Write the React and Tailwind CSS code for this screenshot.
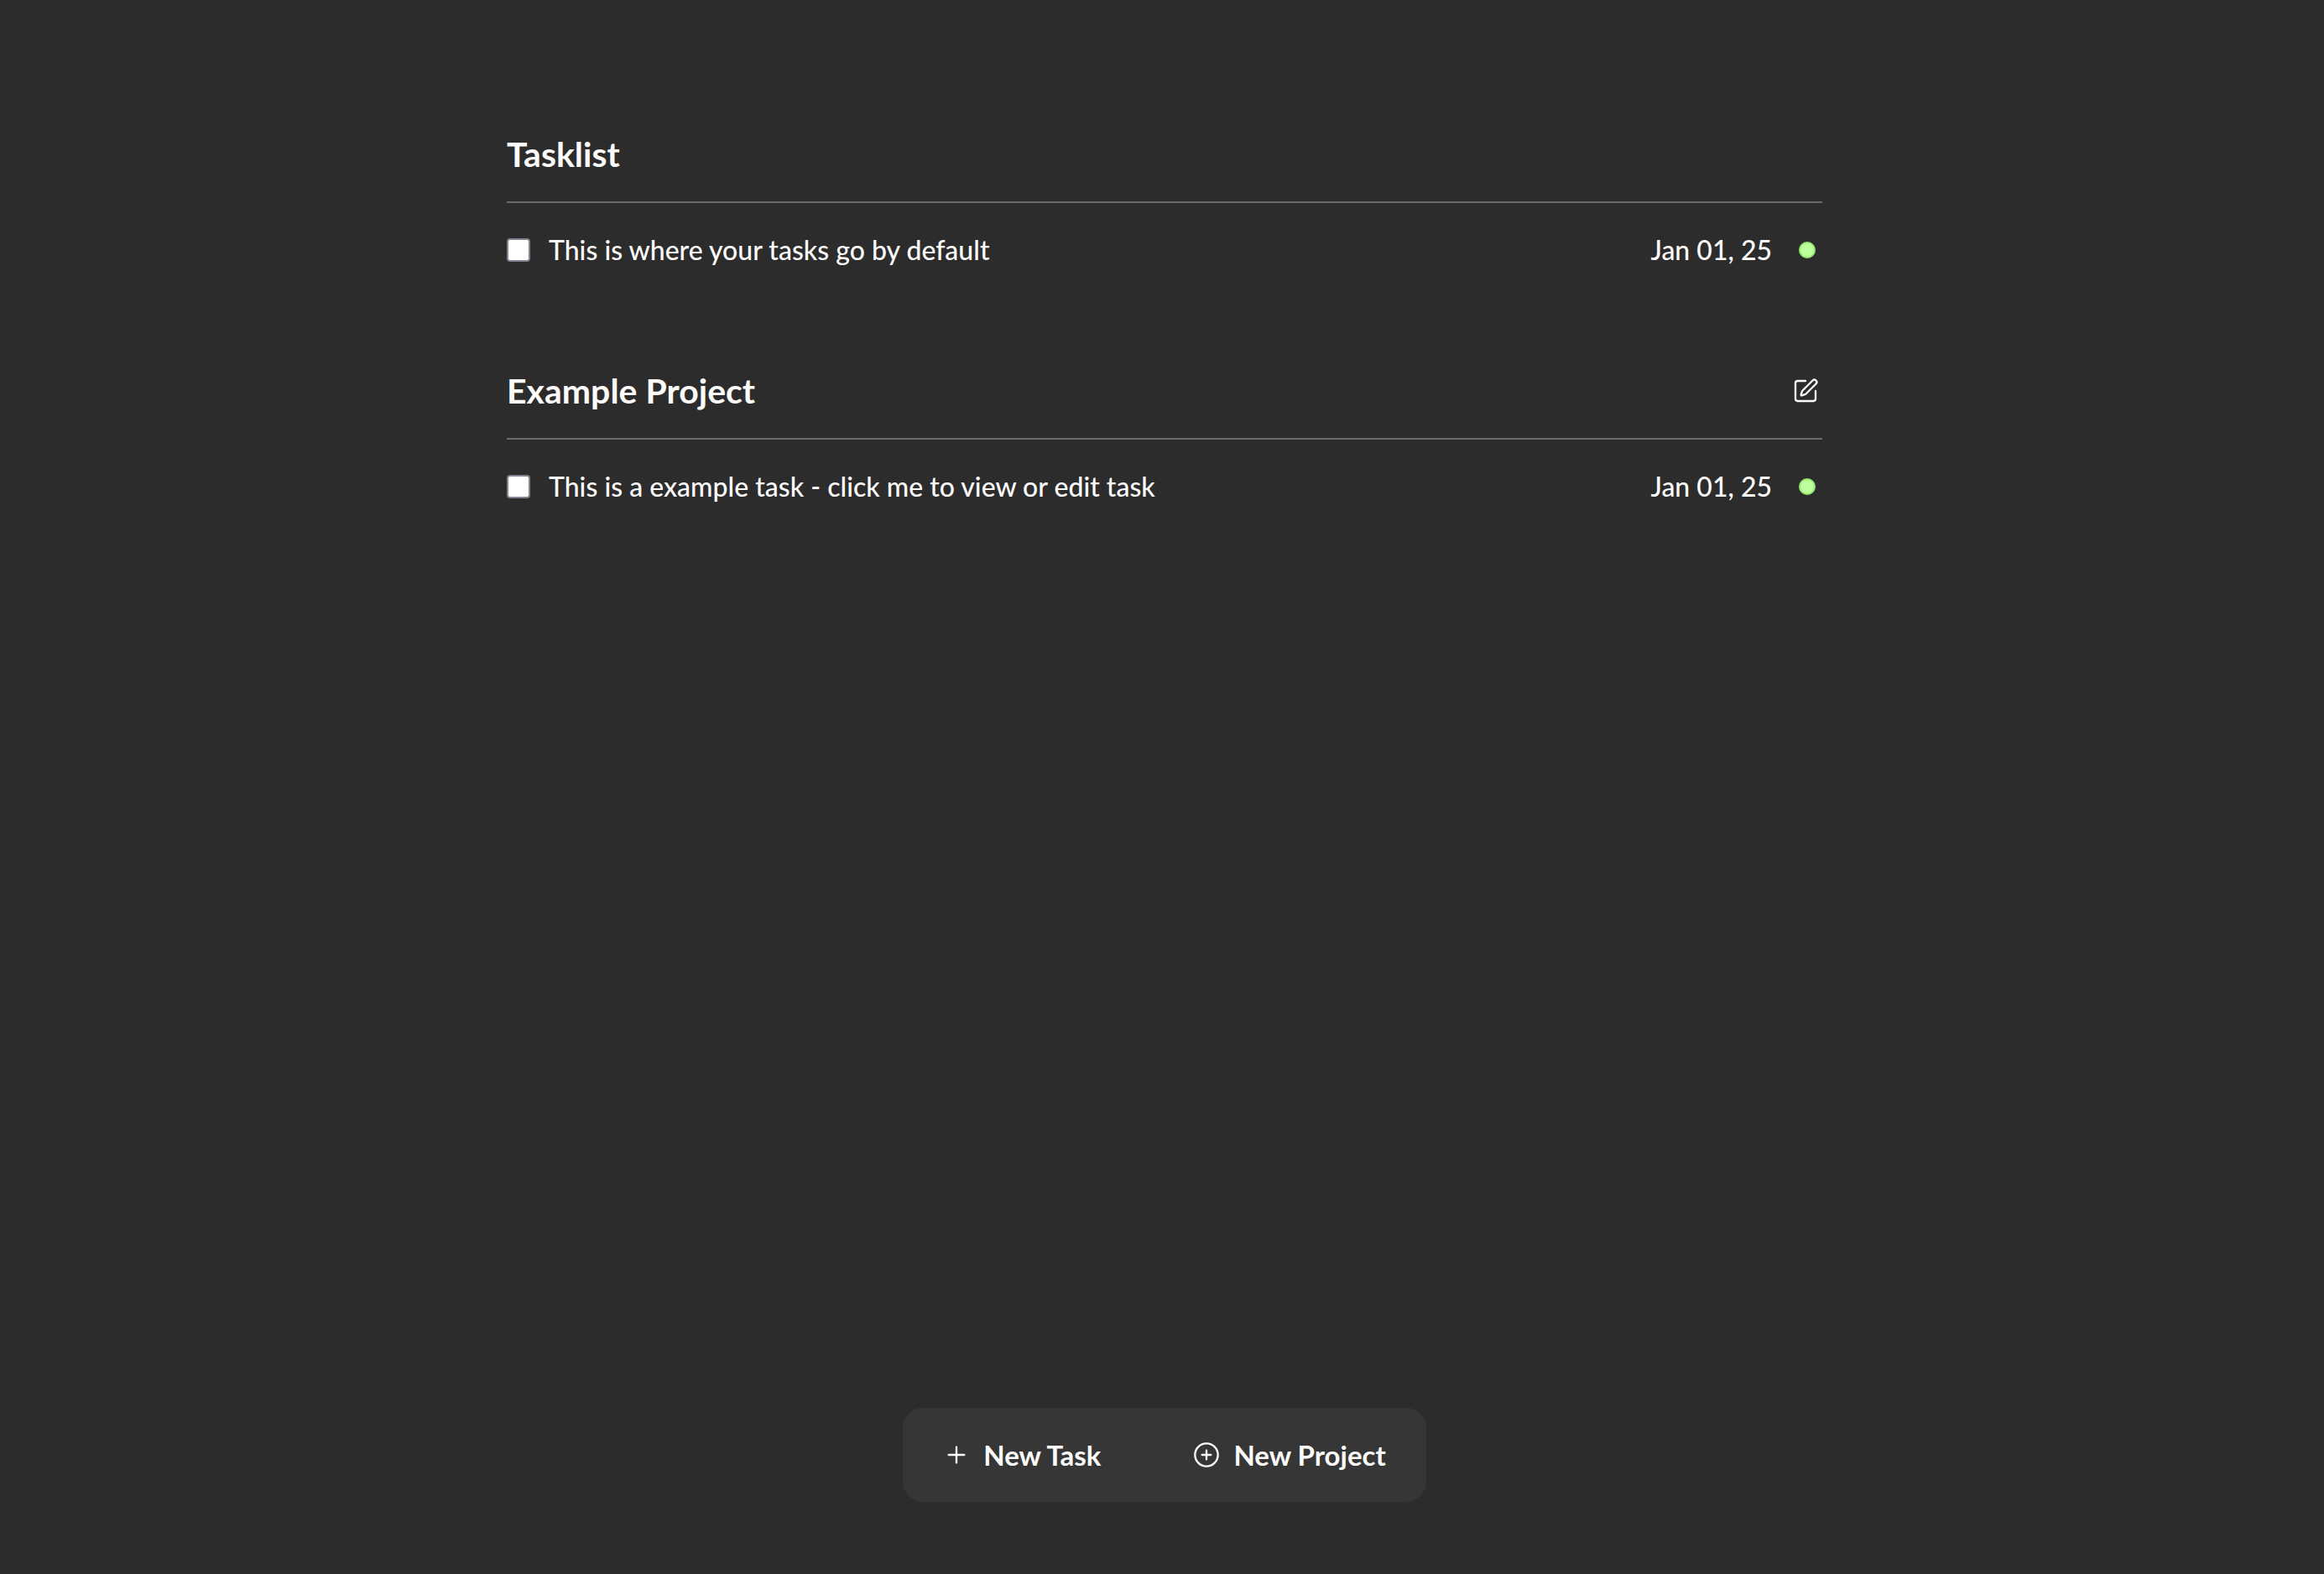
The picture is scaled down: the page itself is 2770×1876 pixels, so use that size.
import { Plus, SquarePen } from "lucide-react";

const sections = [
  { id: "tasklist", title: "Tasklist", editable: false, task: "This is where your tasks go by default", date: "Jan 01, 25" },
  { id: "example", title: "Example Project", editable: true, task: "This is a example task - click me to view or edit task", date: "Jan 01, 25" },
];

function CirclePlusIcon() {
  return (
    <svg viewBox="0 0 24 24" className="size-8" fill="none" stroke="currentColor" strokeWidth="1.75" strokeLinecap="round" aria-hidden="true">
      <circle cx="12" cy="12" r="10.25" />
      <path d="M12 8v8M8 12h8" />
    </svg>
  );
}

function Section({ id, title, editable, task, date }) {
  return (
    <section>
      <header className="flex h-[92px] items-start justify-between border-b-2 border-[#6b6b6b] pr-1">
        <h2 className="text-[41px] leading-[68px] font-bold">{title}</h2>
        {editable && (
          <button type="button" aria-label="Edit project" className="flex h-[68px] items-center">
            <SquarePen className="size-8" strokeWidth={1.75} />
          </button>
        )}
      </header>
      <div className="flex h-28 items-center text-[32px] leading-10 font-medium">
        <input
          id={id}
          type="checkbox"
          className="size-7 shrink-0 appearance-none rounded-[4px] border-2 border-[#858391] bg-white"
        />
        <label htmlFor={id} className="ml-[22px] flex-1">{task}</label>
        <time>{date}</time>
        <span className="mr-2 ml-8 size-5 rounded-full border-2 border-[#95e872] bg-[#bdff9b]" />
      </div>
    </section>
  );
}

export default function App() {
  return (
    <div className="flex min-h-screen flex-col bg-[#2c2c2c] pt-[150px] pb-[86px] pl-1.5 font-['Lato',sans-serif] text-[#fcfbfa]">
      <main className="mx-auto flex w-full max-w-[1568px] flex-1 flex-col gap-[78px]">
        {sections.map((s) => (
          <Section key={s.id} {...s} />
        ))}
      </main>
      <nav className="mx-auto flex h-28 items-center gap-[110px] rounded-3xl bg-[#363636] px-12 text-[33px] leading-10 font-bold">
        <button type="button" className="flex items-center gap-4">
          <Plus className="size-8" strokeWidth={1.75} />
          New Task
        </button>
        <button type="button" className="flex items-center gap-4">
          <CirclePlusIcon />
          New Project
        </button>
      </nav>
    </div>
  );
}
